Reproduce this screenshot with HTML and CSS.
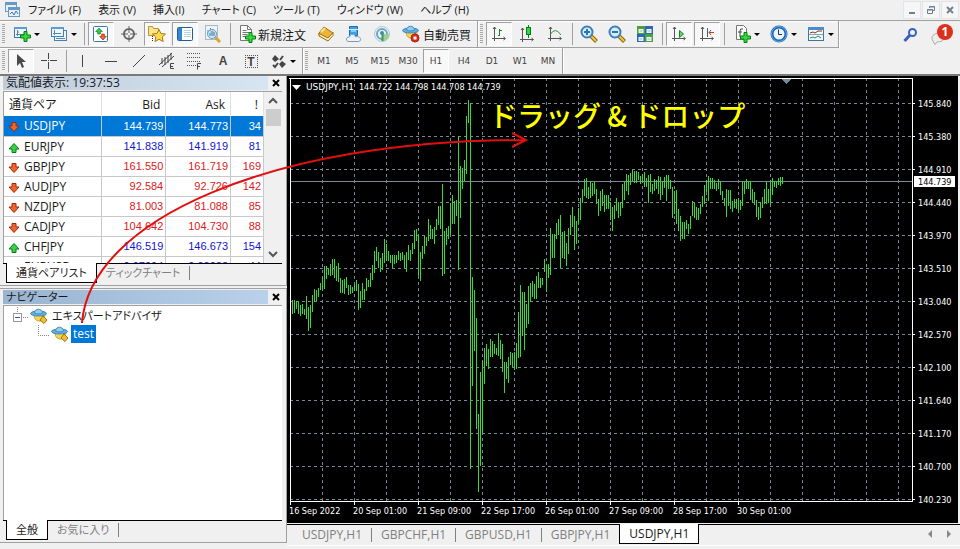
FILE: index.html
```html
<!DOCTYPE html>
<html lang="ja">
<head>
    <meta charset="UTF-8">
    <meta name="viewport" content="width=device-width, initial-scale=1.0">
    <title>USDJPY,H1</title>
    <link rel="stylesheet" href="styles.css">
</head>
<body>

<svg class="defs">
    <symbol id="plus" viewBox="0 0 11 11"><path d="M4 .5h3V4h3.500v3H7v3.500H4V7H.5V4H4z" fill="#2fdc3c" stroke="#0a7a14"/></symbol>
    <symbol id="down" viewBox="0 0 12 12"><path d="M4 1.500h4V5h3L6 10.500 1 5h3z" fill="#f0642d" stroke="#9c2a08"/></symbol>
    <symbol id="up" viewBox="0 0 12 12"><path d="M4 10.500h4V7h3L6 1.500 1 7h3z" fill="#35d045" stroke="#0a7a1c"/></symbol>
    <symbol id="expert" viewBox="0 0 18 16">
        <path d="M4 6c0 6 3 7 6 7s5-3 5-7z" fill="#f7d54c" stroke="#c9a030"/>
        <ellipse cx="8.500" cy="5.500" rx="8" ry="2.500" fill="#5fb0e2" stroke="#4488b8"/>
        <path d="M4.500 5C5 0 12 0 12.500 5c-2 1.200-6 1.200-8 0z" fill="#8ed0f5" stroke="#4488b8"/>
        <path d="M13 8l4 4-3 3.500-4-3.500z" fill="#f2bd37" stroke="#9c7410"/>
    </symbol>
    <symbol id="axes" viewBox="0 0 16 16"><path d="M3.500 1v14M1 12.500h13M2 3l1.500-2L5 3M12.500 11l2 1.500-2 1.500" fill="none" stroke="#555"/></symbol>
    <symbol id="lens" viewBox="0 0 18 18">
        <path d="M11 11l5.500 5.500" stroke="#8a6510" stroke-width="4"/><path d="M11 11l5 5" stroke="#f0c840" stroke-width="2"/>
        <circle cx="7" cy="7" r="5.500" fill="#d5ecfb" stroke="#3d7fb8" stroke-width="2"/>
    </symbol>
</svg>

<header class="menubar">
    <svg class="app-icon" width="16" height="16" viewBox="0 0 16 16"><g fill="#e4f1fb" stroke="#6a98c4"><rect x=".5" y=".5" width="11" height="9"/><rect x="3.500" y="5.500" width="11" height="9"/></g><path d="M1 2h10M4 7h10" stroke="#6a98c4" stroke-width="2"/><path d="M5 12l2-2 2 3 2-4 2 3" fill="none" stroke="#4778ad"/></svg>
    <nav class="menu">
        <a href="#">ファイル (F)</a>
        <a href="#">表示 (V)</a>
        <a href="#">挿入(I)</a>
        <a href="#">チャート (C)</a>
        <a href="#">ツール (T)</a>
        <a href="#">ウィンドウ (W)</a>
        <a href="#">ヘルプ (H)</a>
    </nav>
    <div class="window-buttons">
        <button aria-label="最小化"><svg width="10" height="10"><path d="M2 8h6" stroke="#718190" stroke-width="2"/></svg></button>
        <button aria-label="元に戻す"><svg width="10" height="10" fill="none" stroke="#718190"><path d="M3.500 3V1.500h5v4H7M3 2h6M1 5h6"/><path d="M1.500 4.500h5v4h-5z"/></svg></button>
        <button aria-label="閉じる"><svg width="10" height="10"><path d="M2 2l6 6M8 2L2 8" stroke="#718190" stroke-width="2"/></svg></button>
    </div>
</header>

<div class="toolbar">
    <div class="group">
        <span class="grip"></span>
        <button class="tool drop" aria-label="新規チャート"><svg width="18" height="18"><rect x="1.500" y="2.500" width="12" height="10" fill="#eef6fd" stroke="#3c76a8"/><path d="M1 3h13" stroke="#5d9bd0" stroke-width="2"/><path d="M4.500 5v6M3 9.500h8M4 7h2" stroke="#5b86ac"/><use href="#plus" x="7" y="6" width="11" height="11"/></svg></button>
        <button class="tool drop" aria-label="チャートの組表示"><svg width="18" height="18"><g fill="#eef6fd" stroke="#4580b4"><rect x="4.500" y="5.500" width="12" height="10"/><rect x="1.500" y="2.500" width="12" height="9"/></g><path d="M1 3h13" stroke="#5d9bd0" stroke-width="2"/><path d="M4.500 5v5M3 8.500h8M6 13.500h9" stroke="#5b86ac"/></svg></button>
        <span class="sep"></span>
        <button class="tool on" aria-label="気配値表示"><svg width="18" height="18"><rect x="1.500" y="1.500" width="14" height="15" rx="1" fill="#fdfeff" stroke="#3c76a8" stroke-width="1"/><use href="#up" x="3" y="2" width="8" height="8"/><use href="#down" x="7" y="8" width="8" height="8"/></svg></button>
        <button class="tool" aria-label="データウィンドウ"><svg width="16" height="16" fill="none" stroke="#666"><circle cx="8" cy="8" r="5" stroke-width="2"/><path d="M8 0v7M8 9v7M0 8h7M9 8h7"/></svg></button>
        <button class="tool on" aria-label="ナビゲーター"><svg width="20" height="18"><path d="M1.500 1.500h4l1 2h5v7h-10z" fill="#fbe58a" stroke="#b99433"/><path d="M5.500 11v6" stroke="#333" stroke-dasharray="1 1"/><path d="M12 4.500l2 4 4.500.5-3.300 3 1 4.500-4.200-2.200L8 16.500l.8-4.500-3.300-3 4.500-.5z" fill="#ffda4f" stroke="#a87a18"/></svg></button>
        <button class="tool on" aria-label="ターミナル"><svg width="18" height="18"><rect x="1.500" y="2.500" width="15" height="13" rx="1" fill="#fff" stroke="#205c9a" stroke-width="1"/><path d="M4 3v12" stroke="#3585cf" stroke-width="4"/><path d="M8 5.500h7M8 7.500h7M8 9.500h7M8 11.500h7" stroke="#b8cfe4"/></svg></button>
        <button class="tool" aria-label="ストラテジーテスター"><svg width="18" height="18"><rect x="1.500" y=".5" width="12" height="14" fill="#eef3f7" stroke="#a9b8c4"/><path d="M4 9V5M6.500 8V3M9 10V4" stroke="#4d86b5"/><path d="M11 12l5 5" stroke="#d8a52e" stroke-width="3"/><circle cx="8" cy="9" r="4.500" fill="#c5e2f6" fill-opacity=".8" stroke="#6a9fc8"/><path d="M6 11V8M8 11V6M10 11V7" stroke="#3d74a4"/></svg></button>
        <span class="sep"></span>
        <button class="tool text"><svg width="18" height="18"><path d="M2.500.5h7l4 4v11h-11z" fill="#fbfbfb" stroke="#777"/><path d="M9.500.5v4h4M4.500 5.500h4M4.500 7.500h7M4.500 9.500h5M4.500 11.500h3" fill="none" stroke="#777"/><use href="#plus" x="7" y="7" width="11" height="11"/></svg>新規注文</button>
        <button class="tool" aria-label="MetaEditor"><svg width="18" height="18"><path d="M2 8l5-6 9 6-5 7.500-9-5z" fill="#eeb53c" stroke="#9c6a10"/><path d="M2 8.500l9 4.500 5-5.500v3L11 16l-9-5z" fill="#fff3c4" stroke="#9c6a10"/><path d="M4 7l4-4" stroke="#fbe58e" stroke-width="2"/></svg></button>
        <button class="tool" aria-label="VPS"><svg width="18" height="18"><path d="M4.500 1.500h8v9h-8z" fill="#39a2e8" stroke="#1e6fb0"/><path d="M4 4.500h9M6 6h5" stroke="#d5efff"/><path d="M4 16.500c-4 0-3-5 .5-4.500 1-4 6-3 6 0 5-2 7 4 3 4.500z" fill="#edf3fb" stroke="#8098b8"/></svg></button>
        <button class="tool" aria-label="シグナル"><svg width="18" height="18" fill="none"><circle cx="9" cy="9" r="7.500" stroke="#a4cce0"/><circle cx="9" cy="9" r="5" stroke="#68a7c8" stroke-width="2"/><path d="M9 9h7.500A7.500 7.500 0 0 1 9 16.500z" fill="#9dcf9a"/><circle cx="9" cy="8" r="2" fill="#4388b8"/><path d="M9.500 9v7" stroke="#3e9a48" stroke-width="2"/></svg></button>
        <button class="tool text"><svg width="20" height="18"><use href="#expert" x="1" y="0" width="18" height="16"/><circle cx="14" cy="13" r="4" fill="#dc2a15" stroke="#b02010"/><path d="M12.500 11.500h3v3h-3z" fill="#fff"/></svg>自動売買</button>
    </div>
    <div class="group">
        <span class="grip"></span>
        <button class="tool on" aria-label="バーチャート"><svg width="16" height="16"><use href="#axes" width="16" height="16"/><path d="M8.500 3v7M7 9.500h2M9 4.500h2" stroke="#118a20" stroke-width="1"/></svg></button>
        <button class="tool" aria-label="ローソク足"><svg width="16" height="18"><use href="#axes" y="2" width="16" height="16"/><path d="M9.500 0v13" stroke="#0b7a18"/><rect x="7.500" y="2.500" width="4" height="7" fill="#2fd83c" stroke="#0b7a18"/></svg></button>
        <button class="tool" aria-label="ラインチャート"><svg width="16" height="16"><use href="#axes" width="16" height="16"/><path d="M3 9q5-9 11 0" fill="none" stroke="#2c9a3a"/></svg></button>
        <span class="sep"></span>
        <button class="tool" aria-label="ズームイン"><svg width="18" height="18"><use href="#lens" width="18" height="18"/><path d="M4 7h6M7 4v6" stroke="#2a74b0" stroke-width="2"/></svg></button>
        <button class="tool" aria-label="ズームアウト"><svg width="18" height="18"><use href="#lens" width="18" height="18"/><path d="M4 7h6" stroke="#2a74b0" stroke-width="2"/></svg></button>
        <button class="tool" aria-label="整列"><svg width="18" height="18"><path d="M1 1h8v8H1zM9 9h8v8H9z" fill="#4aa33a"/><path d="M9 1h8v8H9zM1 9h8v8H1z" fill="#2d68b8"/><path d="M2.500 4h5v4h-5zM10.500 4h5v4h-5zM2.500 12h5v4h-5zM10.500 12h5v4h-5z" fill="#eef6f6"/><path d="M3.500 6h3M11.500 6h3M3.500 14h3M11.500 14h3" stroke="#9ab8c4"/></svg></button>
        <span class="sep"></span>
        <button class="tool on" aria-label="自動スクロール"><svg width="16" height="16"><use href="#axes" width="16" height="16"/><path d="M8.500 4.500v7l4-3.500z" fill="#5cdc5c" stroke="#118a20"/></svg></button>
        <button class="tool on" aria-label="チャートシフト"><svg width="16" height="16"><use href="#axes" width="16" height="16"/><path d="M8.500 2v9" stroke="#256a9c"/><path d="M15 6.500h-5M12 4l-2 2.500L12 9" fill="none" stroke="#b8401c"/></svg></button>
        <span class="sep"></span>
        <button class="tool drop" aria-label="インディケータ"><svg width="18" height="18"><path d="M3.500.5h7l3 3v11h-10z" fill="#fbfbfb" stroke="#777"/><path d="M10 4q-3-1-3 2v6M5 7h4" fill="none" stroke="#444"/><use href="#plus" x="7" y="7" width="11" height="11"/></svg></button>
        <button class="tool drop" aria-label="時間足設定"><svg width="18" height="18"><circle cx="9" cy="9" r="7" fill="#e6f4ff" stroke="#2365ae" stroke-width="3"/><circle cx="9" cy="9" r="7.500" fill="none" stroke="#5eaaf0"/><path d="M8.500 4.500V9.500H12" fill="none" stroke="#333"/></svg></button>
        <button class="tool drop" aria-label="定型チャート"><svg width="18" height="18"><rect x="1.500" y="2.500" width="15" height="13" fill="#f4faff" stroke="#3c76a8"/><path d="M1 3.500h16" stroke="#4c8cca" stroke-width="3"/><path d="M2 9.500h14" stroke="#7ba3c6"/><path d="M3 8l3-1 2 1 3-2h4" fill="none" stroke="#8e2e1c"/><path d="M3 13l3-1 2 1 3-2 3 2" fill="none" stroke="#2b9140"/></svg></button>
    </div>
    <div class="status">
        <button aria-label="検索"><svg width="16" height="16" fill="none"><path d="M1.500 14L7 8" stroke="#3a5fc4" stroke-width="3"/><circle cx="9.500" cy="5.500" r="3.500" fill="#eef4ff" stroke="#3a5fc4" stroke-width="2"/></svg></button>
        <button class="message" aria-label="メッセージ"><svg width="16" height="14"><path d="M2 10c-3-4 1-8 6-8s7 4 4 7-5 1-6 2l-2 2.500z" fill="#eee" stroke="#aaa"/></svg><span class="badge">1</span></button>
    </div>
</div>

<div class="toolbar last">
    <div class="group">
        <span class="grip"></span>
        <button class="tool on" aria-label="カーソル"><svg width="12" height="16"><path d="M2 1v12l3-3 2 5 2-1-2-5h4z" fill="#4a4a4a"/></svg></button>
        <button class="tool" aria-label="クロスヘア"><svg width="16" height="16"><path d="M7.500 0v6M7.500 9v7M0 7.500h6M9 7.500h7M7 7.500h1" stroke="#444"/></svg></button>
        <span class="sep"></span>
        <button class="tool" aria-label="垂直線"><svg width="16" height="16"><path d="M7.500 2v12" stroke="#444"/></svg></button>
        <button class="tool" aria-label="水平線"><svg width="16" height="16"><path d="M2 8.500h12" stroke="#444"/></svg></button>
        <button class="tool" aria-label="トレンドライン"><svg width="16" height="16"><path d="M2 14L14 2" stroke="#444"/></svg></button>
        <button class="tool" aria-label="チャネル"><svg width="18" height="18"><path d="M1 13L14 1M4 15L16 4M4 6v6M7 5v8M10 3v8M13 1v7" stroke="#444"/><path d="M16 11.500h-3.500v5H16M12 14.500h3" fill="none" stroke="#444"/></svg></button>
        <button class="tool" aria-label="フィボナッチ"><svg width="18" height="18"><path d="M1 1.500h14M1 5.500h14M1 9.500h14M1 13.500h9" stroke="#555" stroke-dasharray="1 1"/><path d="M15 11.500h-3.500v6M11 14.500h3" fill="none" stroke="#444"/></svg></button>
        <button class="tool bold">A</button>
        <button class="tool bold"><span class="label-box">T</span></button>
        <button class="tool drop" aria-label="矢印"><svg width="16" height="16"><path d="M4 2l4 4-4 3-3-3zM11 8l4 3-4 4-3-4z" fill="#444"/><path d="M12 3L9 7M2 12l2 2 3-4" fill="none" stroke="#444" stroke-width="2"/></svg></button>
    </div>
    <div class="group">
        <span class="grip"></span>
        <button class="tool">M1</button>
        <button class="tool">M5</button>
        <button class="tool">M15</button>
        <button class="tool">M30</button>
        <button class="tool on">H1</button>
        <button class="tool">H4</button>
        <button class="tool">D1</button>
        <button class="tool">W1</button>
        <button class="tool">MN</button>
    </div>
</div>

<main class="workspace">
    <aside class="sidebar">
        <section class="panel market">
            <div class="panel-head">
                <h2>気配値表示: 19:37:53</h2>
                <button aria-label="閉じる"><svg width="8" height="8"><path d="M1 1l6 6M7 1L1 7" stroke="#000" stroke-width="2"/></svg></button>
            </div>
            <div class="panel-body">
                <table>
                    <thead>
                        <tr><th>通貨ペア</th><th>Bid</th><th>Ask</th><th>!</th></tr>
                    </thead>
                    <tbody id="quotes"></tbody>
                </table>
                <div class="scrollbar">
                    <svg width="10" height="8"><path d="M1 6l4-4 4 4" fill="none" stroke="#555" stroke-width="2"/></svg>
                    <span class="thumb"></span>
                    <svg width="10" height="8"><path d="M1 2l4 4 4-4" fill="none" stroke="#555" stroke-width="2"/></svg>
                </div>
            </div>
            <div class="panel-tabs">
                <button class="active">通貨ペアリスト</button>
                <button>ティックチャート</button>
            </div>
        </section>

        <section class="panel navigator">
            <div class="panel-head">
                <h2>ナビゲーター</h2>
                <button aria-label="閉じる"><svg width="8" height="8"><path d="M1 1l6 6M7 1L1 7" stroke="#000" stroke-width="2"/></svg></button>
            </div>
            <div class="panel-body">
                <ul class="tree">
                    <li>
                        <svg width="16" height="18"><path d="M4.500 0v6M10 10.500h6" stroke="#888" stroke-dasharray="1 1"/><rect x=".5" y="6.500" width="8" height="8" fill="#fff" stroke="#999"/><path d="M2 10.500h5" stroke="#3557a5"/></svg>
                        <svg width="18" height="16"><use href="#expert"/></svg>
                        <span class="kana">エキスパートアドバイザ</span>
                    </li>
                    <li class="child">
                        <svg width="12" height="18"><path d="M.5 0v10.500H12" fill="none" stroke="#888" stroke-dasharray="1 1"/></svg>
                        <svg width="18" height="16"><use href="#expert"/></svg>
                        <span class="selected">test</span>
                    </li>
                </ul>
            </div>
            <div class="panel-tabs">
                <button class="active">全般</button>
                <button>お気に入り</button>
            </div>
        </section>
    </aside>

    <section class="chart-area">
        <div class="chart" id="chart">
            <svg id="plot"></svg>
            <div class="chart-title">
                <svg width="9" height="5"><path d="M0 0h9L4.500 5z" fill="#fff"/></svg>
                <span class="symbol">USDJPY,H1</span>
                <span>144.722 144.798 144.708 144.739</span>
            </div>
            <p class="hint">ドラッグ &amp; ドロップ</p>
        </div>
        <div class="chart-tabs">
            <button>USDJPY,H1</button>
            <button>GBPCHF,H1</button>
            <button>GBPUSD,H1</button>
            <button>GBPJPY,H1</button>
            <button class="active">USDJPY,H1</button>
            <svg class="tab-scroll" width="24" height="8"><path d="M4 0v8L0 4zM19 0v8l4-4z" fill="#888"/></svg>
        </div>
    </section>

    <!-- ドラッグの軌跡 -->
    <svg class="drag-arrow" width="540" height="260" fill="none" stroke="#e01010" stroke-width="2">
        <path d="M82 247C90 144 270 64 526 64M512 57l14 7-14 7"/>
    </svg>
</main>

<script>
    // 通貨ペア, Bid, Ask, スプレッド, 方向
    const quotes = [
        ['USDJPY', '144.739', '144.773', '34', 'down'],
        ['EURJPY', '141.838', '141.919', '81', 'up'],
        ['GBPJPY', '161.550', '161.719', '169', 'down'],
        ['AUDJPY', '92.584', '92.726', '142', 'down'],
        ['NZDJPY', '81.003', '81.088', '85', 'down'],
        ['CADJPY', '104.642', '104.730', '88', 'down'],
        ['CHFJPY', '146.519', '146.673', '154', 'up'],
        ['EURUSD', '0.97994', '0.98038', '44', 'up']
    ];

    document.getElementById('quotes').innerHTML = quotes.map((q, i) => `
        <tr class="${q[4]}${i === 0 ? ' selected' : ''}">
            <td class="pair"><svg width="12" height="12"><use href="#${q[4]}"/></svg>${q[0]}</td>
            <td>${q[1]}</td><td>${q[2]}</td><td>${q[3]}</td>
        </tr>`).join('');

    // バーの高値,安値
    const bars = `293,315 300,314 300,313 301,309 302,314 305,316 304,314 309,315 296,319 307,331
        305,328 295,312 289,302 290,301 288,297 283,290 277,290 266,289 266,279 269,275
        264,276 259,275 259,278 266,281 263,282 278,293 280,293 279,294 277,288 285,295
        285,294 287,293 284,291 280,291 284,310 291,308 283,300 289,300 278,291 280,287
        273,287 265,280 251,273 247,261 252,268 258,272 253,270 239,263 244,261 251,261
        255,263 255,268 255,264 255,263 251,260 253,261 252,260 255,268 252,272 245,260
        250,261 243,254 230,249 229,241 235,276 252,281 246,259 236,254 237,246 219,241
        225,239 229,239 227,244 219,230 206,225 206,229 184,276 231,274 228,245 226,239
        203,234 195,224 201,224 200,216 136,270 166,218 168,189 160,181 116,174 100,123
        103,469 277,386 290,351 318,429 414,492 372,466 361,433 348,384 344,366 349,369
        339,357 341,357 344,354 348,355 333,356 340,359 344,372 362,393 362,379 357,383
        352,365 353,367 352,370 343,369 312,358 285,357 292,336 292,350 304,328 286,324
        283,302 281,297 284,299 276,299 272,288 278,288 278,285 259,272 265,292 264,278
        228,275 234,258 234,258 223,239 219,235 215,268 232,258 231,259 243,266 228,254
        215,235 207,227 216,250 221,244 208,224 198,220 189,203 179,196 178,198 187,199
        181,198 183,196 182,194 189,204 199,216 191,211 189,206 195,212 195,209 195,209
        202,220 207,231 205,219 198,211 202,218 202,216 184,208 181,200 174,191 175,195
        173,185 170,181 171,183 171,183 172,180 176,184 174,182 172,187 178,187 175,203
        174,192 184,194 179,191 180,189 176,194 177,200 181,195 177,188 175,201 175,189
        180,189 187,218 191,214 190,224 209,231 216,241 222,239 222,239 220,229 224,234
        216,229 201,216 203,218 207,220 208,220 204,214 196,207 185,204 180,192 176,201
        178,189 178,189 180,189 183,191 179,189 182,195 191,200 198,206 189,217 190,206
        190,209 201,212 199,208 199,209 198,213 200,210 181,206 181,194 179,189 181,189
        181,200 189,202 192,205 200,217 207,220 202,218 197,208 189,204 182,204 189,203
        180,205 178,195 181,187 181,188 178,185 177,186 177,184`.trim().split(/\s+/).map(b => b.split(','));

    const prices = ['145.840', '145.380', '144.910', '144.440', '143.970', '143.510', '143.040',
        '142.570', '142.100', '141.640', '141.170', '140.700', '140.230'];
    const dates = ['16 Sep 2022', '20 Sep 01:00', '21 Sep 09:00', '22 Sep 17:00', '26 Sep 01:00',
        '27 Sep 09:00', '28 Sep 17:00', '30 Sep 01:00'];

    const LEFT = 3, TOP = 2, AXIS = 46, FOOT = 21, BASE = 76;

    function drawChart() {
        const chart = document.getElementById('chart');
        const right = chart.clientWidth - AXIS;
        const bottom = chart.clientHeight - FOOT;
        let grid = '', ticks = '', text = '', shape = '';

        for (let x = LEFT + 32; x < right; x += 32) grid += `M${x}.5 ${TOP}V${bottom}`;
        prices.forEach((price, i) => {
            const y = 27 + i * 33;
            grid += `M${LEFT} ${y}.5H${right}`;
            ticks += `M${right} ${y}.5h3`;
            text += `<text x="${right + 6}" y="${y + 4}">${price}</text>`;
        });
        dates.forEach((date, i) => {
            const x = LEFT + i * 64;
            ticks += `M${x}.5 ${bottom}v4`;
            text += `<text x="${x - 1}" y="${bottom + 13}">${date}</text>`;
        });
        bars.forEach((b, i) => {
            shape += `M${LEFT + i * 2}.5 ${b[0] - BASE}V${b[1] - BASE}`;
        });

        document.getElementById('plot').innerHTML = `
            <path class="grid" d="${grid}"/>
            <path class="bid" d="M${LEFT} 105.5H${right}"/>
            <path class="bars" d="${shape}"/>
            <path class="frame" d="M${LEFT - 1} ${TOP}.5H${right}.5V${bottom}.5H${LEFT}.5V${TOP}${ticks}"/>
            <path class="shift" d="M494 3h10l-5 5z"/>
            ${text}
            <rect class="price-box" x="${right + 2}" y="100" width="41" height="11"/>
            <text class="price-now" x="${right + 6}" y="109">144.739</text>`;
    }

    drawChart();
    window.addEventListener('resize', drawChart);
</script>

</body>
</html>
```
FILE: styles.css
```css
* {
    box-sizing: border-box;
}

body {
    margin: 0;
    height: 100vh;
    display: flex;
    flex-direction: column;
    overflow: hidden;
    background: #f0f0f0;
    color: #1a1a1a;
    font-family: "Open Sans", "Noto Sans CJK JP", sans-serif;
    font-size: 12px;
    font-feature-settings: "palt";
    padding-bottom: 3px;
}

button {
    font: inherit;
    font-feature-settings: inherit;
    color: inherit;
    background: none;
    border: 0;
    padding: 0;
    white-space: nowrap;
}

svg {
    display: block;
    flex: none;
}

.defs {
    position: absolute;
    width: 0;
    height: 0;
}

/* メニュー */
.menubar {
    display: flex;
    align-items: center;
    height: 21px;
    border-bottom: 1px solid #a0a0a0;
    flex: none;
}

.app-icon {
    margin: 0 7px 0 5px;
}

.menu {
    display: flex;
    gap: 17px;
    flex: 1;
    font-size: 11px;
}

.menu a {
    color: inherit;
    text-decoration: none;
    line-height: 18px;
    white-space: nowrap;
}

.window-buttons {
    display: flex;
    gap: 1px;
    margin-right: 1px;
}

.window-buttons button {
    width: 18px;
    height: 18px;
    display: flex;
    align-items: center;
    justify-content: center;
    background: #f6f6f6;
    border: 1px solid #fff;
    outline: 1px solid #e4e4e4;
    outline-offset: -1px;
}

/* ツールバー */
.toolbar {
    display: flex;
    height: 27px;
    flex: none;
}

.toolbar.last {
    border-bottom: 2px solid #7a7a7a;
    height: 28px;
}

.group {
    display: flex;
    align-items: center;
    border: solid #a0a0a0;
    border-width: 0 1px 1px 0;
    box-shadow: inset 0 1px #fff, 1px 0 #fff;
}

.last .group {
    border-bottom: 0;
}

.grip {
    width: 3px;
    height: 20px;
    margin: 0 2px;
    background: repeating-linear-gradient(#a8a8a8 0 1px, #f0f0f0 1px 2px);
}

.tool {
    width: 28px;
    height: 24px;
    display: flex;
    align-items: center;
    justify-content: center;
    color: #444;
    font: 9px "DejaVu Sans", sans-serif;
}

.tool.on {
    width: 26px;
    margin: 0 1px;
    background: #f8f8f8;
    border: 1px solid #fff;
    border-top-color: #a0a0a0;
    border-left-color: #a0a0a0;
}

.tool.drop {
    width: 37px;
    justify-content: flex-start;
    padding-left: 6px;
    gap: 3px;
}

.tool.drop::after {
    content: "";
    border: 3px solid transparent;
    border-top-color: #000;
    border-bottom: 0;
}

.tool.text {
    width: auto;
    padding: 0 6px 0 5px;
    gap: 2px;
    color: #1a1a1a;
    font: 12px "Noto Sans CJK JP", sans-serif;
}

.tool.bold {
    font: bold 12px "Liberation Sans", sans-serif;
}

.label-box {
    width: 13px;
    height: 13px;
    line-height: 12px;
    border: 1px dotted #555;
}

.sep {
    width: 6px;
    height: 22px;
    background: linear-gradient(#a0a0a0, #a0a0a0) center / 1px 100% no-repeat;
}

.status {
    display: flex;
    align-items: center;
    gap: 12px;
    margin: 0 7px 0 auto;
}

.message {
    position: relative;
    width: 22px;
    padding-top: 6px;
}

.badge {
    position: absolute;
    top: -1px;
    right: 0;
    width: 16px;
    height: 16px;
    border-radius: 50%;
    background: #dc301c;
    color: #fff;
    font-weight: bold;
    line-height: 16px;
}

/* 左側パネル */
.workspace {
    position: relative;
    flex: 1;
    min-height: 0;
    display: flex;
}

.sidebar {
    width: 287px;
    flex: none;
    display: flex;
    flex-direction: column;
    gap: 2px;
    padding-bottom: 3px;
}

.panel {
    display: flex;
    flex-direction: column;
    padding: 0 4px 2px 3px;
    min-height: 0;
    border: solid #a0a0a0;
    border-width: 0 1px 1px 0;
}

.market {
    height: 210px;
}

.navigator {
    flex: 1;
    border-top-width: 1px;
    padding-top: 1px;
}

.panel-head {
    display: flex;
    height: 15px;
    flex: none;
    align-items: flex-start;
}

.panel-head h2 {
    flex: 1;
    margin: 0;
    padding-left: 3px;
    font-size: 12px;
    font-weight: normal;
    line-height: 14px;
    background: linear-gradient(90deg, #bfcddb, #d7e4f2);
}

.navigator .panel-head h2 {
    font-size: 11px;
    background: linear-gradient(90deg, #99b4d1, #b9d1ea);
}

.panel-head button {
    width: 14px;
    height: 14px;
    padding-left: 4px;
}

.panel-body {
    flex: 1;
    min-height: 0;
    display: flex;
    align-items: stretch;
    overflow: hidden;
    background: #fff;
    border: solid #a0a0a0;
    border-width: 1px 0 0 1px;
}

table {
    flex: 1;
    align-self: flex-start;
    table-layout: fixed;
    width: 100%;
    border-collapse: collapse;
}

th {
    height: 24px;
    padding: 0 5px;
    border-right: 1px solid #e0e0e0;
    font-weight: normal;
    text-align: right;
}

th:first-child {
    width: 97px;
    text-align: left;
}

th:last-child {
    width: 33px;
}

td {
    height: 20px;
    padding: 0 2px;
    border: solid #c8c8c8;
    border-width: 0 1px 1px 0;
    font: 11px "Liberation Sans", sans-serif;
    text-align: right;
}

.up td {
    color: #1414d2;
}

.down td {
    color: #dc2020;
}

tr .pair {
    padding: 0 0 0 4px;
    color: #1a1a1a;
    font: 12px/17px "Open Sans", sans-serif;
    text-align: left;
}

.pair svg {
    float: left;
    margin: 4px 4px 0 0;
}

tr.selected td {
    background: #0078d7;
    color: #fff;
}

.scrollbar {
    width: 18px;
    flex: none;
    display: flex;
    flex-direction: column;
    align-items: center;
    padding: 5px 0;
    background: #f0f0f0;
}

.thumb {
    width: 15px;
    height: 17px;
    margin: 4px 0 auto;
    background: #cdcdcd;
}

.panel-tabs {
    display: flex;
    height: 20px;
    flex: none;
    padding-left: 3px;
    border-top: 1px solid #000;
    font-size: 11px;
}

.panel-tabs button {
    height: 14px;
    margin-top: 2px;
    padding: 0 9px;
    border-right: 1px solid #808080;
    color: #808080;
    line-height: 14px;
}

.panel-tabs .active {
    height: 20px;
    margin-top: -1px;
    background: #fff;
    border: solid #000;
    border-width: 0 1px 1px;
    color: #1a1a1a;
    line-height: 18px;
}

.tree {
    list-style: none;
    margin: 1px 0 0;
    padding: 0 0 0 9px;
}

.tree li {
    display: flex;
    align-items: center;
    height: 18px;
    gap: 1px;
}

.tree .child {
    padding-left: 25px;
}

.tree span {
    padding: 0 2px;
    margin-left: 1px;
    line-height: 18px;
}

.tree .kana {
    font-size: 11px;
}

.tree .selected {
    background: #0078d7;
    color: #fff;
}

/* チャート */
.chart-area {
    flex: 1;
    min-width: 0;
    display: flex;
    flex-direction: column;
}

.chart {
    position: relative;
    flex: 1;
    min-height: 0;
    margin-right: 2px;
    background: #000;
    border-bottom: 1px solid #000;
}

#plot {
    width: 100%;
    height: 100%;
    font: 9px "DejaVu Sans Condensed", "DejaVu Sans", sans-serif;
    fill: #fff;
}

#plot path {
    fill: none;
    shape-rendering: crispEdges;
}

#plot .grid {
    stroke: #778899;
    stroke-dasharray: 3 3;
}

#plot .bid {
    stroke: #778899;
}

#plot .bars {
    stroke: #32dc32;
}

#plot .frame {
    stroke: #fff;
}

#plot .shift {
    fill: #778899;
}

#plot .price-now {
    fill: #000;
}

.chart-title {
    position: absolute;
    top: 5px;
    left: 5px;
    display: flex;
    align-items: center;
    gap: 5px;
    color: #fff;
    font: 9px/12px "DejaVu Sans Condensed", "DejaVu Sans", sans-serif;
}

.chart-title .symbol {
    font-family: "DejaVu Sans", sans-serif;
}

.hint {
    position: absolute;
    top: 22px;
    left: 202px;
    margin: 0;
    color: #ffff00;
    font-family: "Noto Sans CJK JP", sans-serif;
    font-size: 28px;
    font-weight: 500;
    font-feature-settings: normal;
    line-height: 34px;
    white-space: nowrap;
}

.chart-tabs {
    display: flex;
    height: 22px;
    flex: none;
    margin-top: 1px;
    padding-left: 6px;
    border-top: 1px solid #000;
    border-bottom: 1px solid #fff;
}

.chart-tabs button {
    height: 14px;
    margin-top: 3px;
    padding: 0 9px;
    border-right: 1px solid #808080;
    color: #808080;
    line-height: 14px;
}

.chart-tabs button:nth-last-child(3) {
    border-right: 0;
}

.chart-tabs .active {
    height: 20px;
    margin-top: -1px;
    border: solid #000;
    border-width: 0 1px 1px;
    background: #fff;
    color: #1a1a1a;
    line-height: 20px;
}

.tab-scroll {
    margin: 5px 8px 0 auto;
}

.drag-arrow {
    position: absolute;
    top: 0;
    left: 0;
    pointer-events: none;
}
```
